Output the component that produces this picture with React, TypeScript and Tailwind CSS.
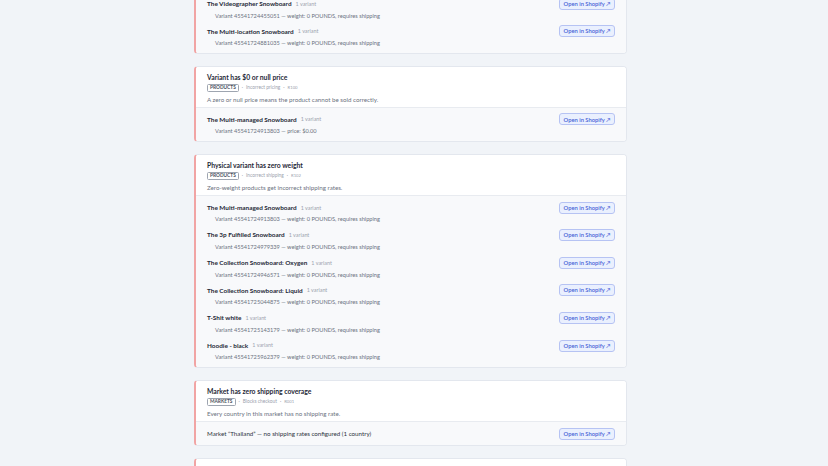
import React from "react";

type Item = { title?: string; count?: string; detail?: string; line?: string };
type Issue = {
  title: string;
  tag: string;
  category: string;
  code: string;
  description: string;
  items: Item[];
};

const issues: Issue[] = [
  {
    title: "Physical variant has zero weight",
    tag: "PRODUCTS",
    category: "Incorrect shipping",
    code: "R102",
    description: "Zero-weight products get incorrect shipping rates.",
    items: [
      { title: "The Videographer Snowboard", count: "1 variant", detail: "Variant 45541724455051 — weight: 0 POUNDS, requires shipping" },
      { title: "The Multi-location Snowboard", count: "1 variant", detail: "Variant 45541724881035 — weight: 0 POUNDS, requires shipping" },
    ],
  },
  {
    title: "Variant has $0 or null price",
    tag: "PRODUCTS",
    category: "Incorrect pricing",
    code: "R100",
    description: "A zero or null price means the product cannot be sold correctly.",
    items: [
      { title: "The Multi-managed Snowboard", count: "1 variant", detail: "Variant 45541724913803 — price: $0.00" },
    ],
  },
  {
    title: "Physical variant has zero weight",
    tag: "PRODUCTS",
    category: "Incorrect shipping",
    code: "R102",
    description: "Zero-weight products get incorrect shipping rates.",
    items: [
      { title: "The Multi-managed Snowboard", count: "1 variant", detail: "Variant 45541724913803 — weight: 0 POUNDS, requires shipping" },
      { title: "The 3p Fulfilled Snowboard", count: "1 variant", detail: "Variant 45541724979339 — weight: 0 POUNDS, requires shipping" },
      { title: "The Collection Snowboard: Oxygen", count: "1 variant", detail: "Variant 45541724946571 — weight: 0 POUNDS, requires shipping" },
      { title: "The Collection Snowboard: Liquid", count: "1 variant", detail: "Variant 45541725044875 — weight: 0 POUNDS, requires shipping" },
      { title: "T-Shit white", count: "1 variant", detail: "Variant 45541725143179 — weight: 0 POUNDS, requires shipping" },
      { title: "Hoodie - black", count: "1 variant", detail: "Variant 45541725962379 — weight: 0 POUNDS, requires shipping" },
    ],
  },
  {
    title: "Market has zero shipping coverage",
    tag: "MARKETS",
    category: "Blocks checkout",
    code: "R001",
    description: "Every country in this market has no shipping rate.",
    items: [{ line: "Market “Thailand” — no shipping rates configured (1 country)" }],
  },
  {
    title: "Market has no currency configured",
    tag: "MARKETS",
    category: "Blocks checkout",
    code: "R002",
    description: "Customers in this market cannot see prices.",
    items: [],
  },
];

function ShopifyButton() {
  return (
    <button className="shrink-0 h-[12px] w-[56px] flex items-center justify-center rounded-[3px] border border-[#b6c3f3] bg-[#eaf0fe] text-[5.8px] font-semibold leading-none text-[#4862d6]">
      Open in Shopify ↗
    </button>
  );
}

function IssueCard({ issue }: { issue: Issue }) {
  return (
    <div className="overflow-hidden rounded-[4px] border border-[#e3e7ee] border-l-2 border-l-[#f1a4a4] bg-white">
      <div className="border-b border-[#e8ebf0] bg-white pl-[11px] pr-[12px] pt-[4.5px] pb-[2.5px]">
        <div className="h-[10px] flex items-center text-[6.8px] font-bold text-[#1f2937]">{issue.title}</div>
        <div className="mt-[1px] h-[10px] flex items-center gap-[3px] text-[4.8px] text-[#9aa1ad]">
          <span className="h-[8px] px-[2px] flex items-center rounded-[1.5px] border border-[#9ea5b0] text-[4.8px] font-bold text-[#4b5260]">
            {issue.tag}
          </span>
          <span>·</span>
          <span>{issue.category}</span>
          <span>·</span>
          <span className="text-[4.2px]">{issue.code}</span>
        </div>
        <div className="mt-[1.5px] h-[10px] flex items-center text-[6.2px] text-[#6b7280]">{issue.description}</div>
      </div>
      <div className="bg-[#f8f9fb] pl-[11px] pr-[11px] pt-[4px] pb-[2px]">
        {issue.items.map((item, i) =>
          item.line ? (
            <div key={i} className="flex items-center justify-between pt-[2px] pb-[3.6px]">
              <span className="text-[6.2px] text-[#2d3440]">{item.line}</span>
              <ShopifyButton />
            </div>
          ) : (
            <div key={i} className="flex items-start justify-between py-[2.8px]">
              <div>
                <div className="h-[10px] flex items-center gap-[4px]">
                  <span className="text-[6.4px] font-bold text-[#1f2937]">{item.title}</span>
                  <span className="text-[5.4px] text-[#9ca3af]">{item.count}</span>
                </div>
                <div className="mt-[2px] h-[10px] flex items-center pl-[8px] text-[5.65px] text-[#6b7280]">
                  {item.detail}
                </div>
              </div>
              <div className="-mt-[1px]">
                <ShopifyButton />
              </div>
            </div>
          )
        )}
      </div>
    </div>
  );
}

export default function App() {
  return (
    <div
      className="h-[466px] overflow-hidden bg-[#f1f4f8]"
      style={{ fontFamily: 'Lato, "Liberation Sans", Arial, sans-serif' }}
    >
      <div className="-mt-[49.5px] ml-[194px] w-[433px] flex flex-col gap-[12px]">
        {issues.map((issue, i) => (
          <IssueCard key={i} issue={issue} />
        ))}
      </div>
    </div>
  );
}
